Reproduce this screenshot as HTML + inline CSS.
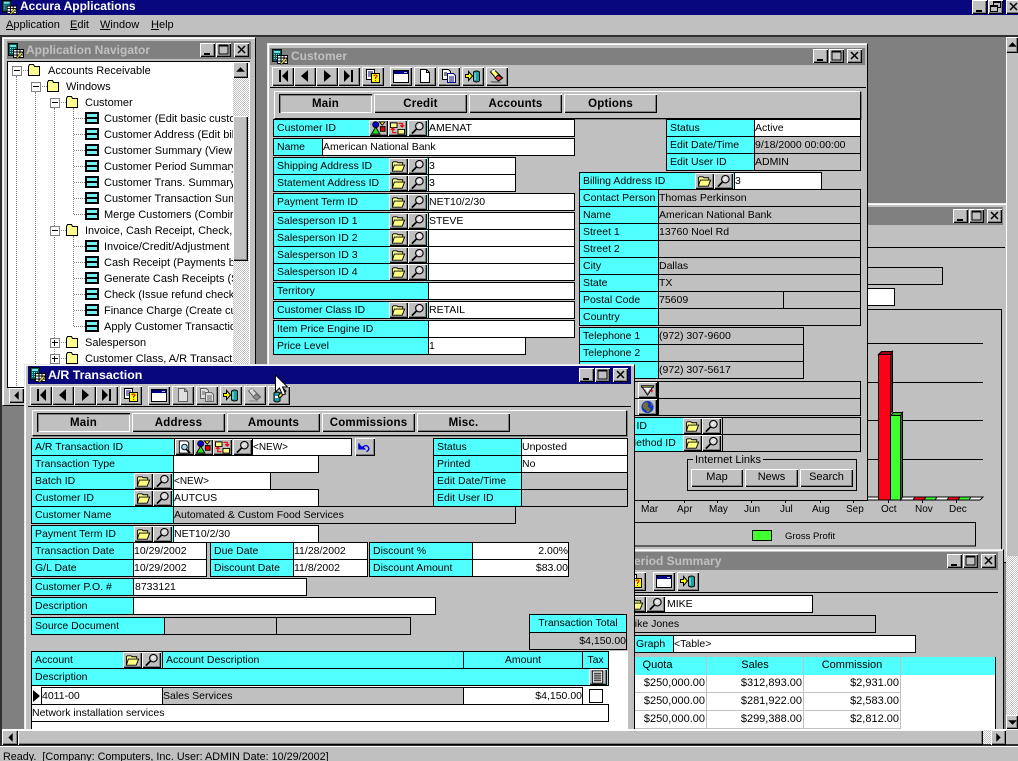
<!DOCTYPE html>
<html><head><meta charset="utf-8"><title>Accura Applications</title>
<style>
html,body{margin:0;padding:0}
#p{position:relative;width:1018px;height:761px;overflow:hidden;background:#808080;font:11px/15px "Liberation Sans",sans-serif;color:#000}
#p div,#p svg{position:absolute}
#p div{box-sizing:border-box;white-space:nowrap}
.l,.w,.g{border:1px solid #000;height:18px;line-height:17px;overflow:hidden;font-size:10.5px}
.l{background:#50ffff;padding-left:3px}
.w{background:#fff;padding-left:0}
.g{background:#c0c0c0;padding-left:0}
.r{text-align:right;padding-right:0}
.c{text-align:center;padding-left:0}
.win{background:#c0c0c0;border:1px solid;border-color:#e8e8e8 #000 #000 #e8e8e8;box-shadow:inset 1px 1px #fff}
.b{background:#c0c0c0;box-shadow:inset 1px 1px #fff,inset -1px -1px #000,inset -2px -2px #808080;width:19px;height:16px}
.b svg{left:2px;top:1px;width:15px;height:14px}
.t{background:#c0c0c0;box-shadow:inset 1px 1px #fff,inset -1px -1px #000,inset -2px -2px #808080;width:22px;height:19px}
.t svg{left:3px;top:1px;width:16px;height:16px}
.d svg{filter:grayscale(1) contrast(.4) brightness(1.25)}
.wb{background:#c0c0c0;box-shadow:inset 1px 1px #fff,inset -1px -1px #000,inset -2px -2px #808080;width:15px;height:14px}
.wb svg{left:0;top:0;width:15px;height:14px}
.ti{font-weight:bold;font-size:12px;line-height:16px}
.tab{background:#c0c0c0;font-weight:bold;font-size:11.5px;text-align:center;line-height:20px;height:19px;width:93px;box-shadow:inset 1px 1px #fff,inset -1px -1px #000,inset -2px -2px #808080;letter-spacing:.2px}
.tab.on{box-shadow:inset 1px 1px #000,inset 2px 2px #808080,inset -1px -1px #fff}
.fr{border:1px solid;border-color:#fff #000 #000 #fff;box-shadow:1px 1px #808080}
.x{line-height:17px}
.dv{border-left:1px dotted #808080;width:1px}
.dh{border-top:1px dotted #808080;height:1px}
.e{width:10px;height:10px;border:1px solid #808080;background:#fff}
.e i{position:absolute;left:1px;top:3px;width:6px;height:1px;background:#000}
.e u{position:absolute;left:3px;top:1px;width:1px;height:6px;background:#000}
.dz{background:repeating-conic-gradient(#c0c0c0 0 25%,#fff 0 50%) 0 0/2px 2px}
.pb{background:#c0c0c0;box-shadow:inset 1px 1px #fff,inset -1px -1px #000,inset -2px -2px #808080;text-align:center;line-height:16px;height:18px;font-size:11px}
.k{background:#000;height:1px}
.gh{background:#50ffff;text-align:center;line-height:17px}
.gc{background:#fff;text-align:right;border-right:1px solid #c0c0c0;border-bottom:1px solid #c0c0c0;height:18px;line-height:17px;padding-right:1px}
.m{font-size:10px;top:502px}
</style></head><body>
<svg width="0" height="0" style="position:absolute;left:-99px">
<symbol id="first" viewBox="0 0 16 16"><path d="M4 2h2v12H4zM13 2v12L7 8z"/></symbol>
<symbol id="prev" viewBox="0 0 16 16"><path d="M11 2v12L4 8z"/></symbol>
<symbol id="next" viewBox="0 0 16 16"><path d="M5 2v12l7-6z"/></symbol>
<symbol id="last" viewBox="0 0 16 16"><path d="M3 2v12l6-6zM10 2h2v12h-2z"/></symbol>
<symbol id="help" viewBox="0 0 16 16"><path d="M1.500 1.500h8v10h-8z" fill="#fff" stroke="#000"/><path d="M3 4h5M3 6h3M3 8h3" stroke="#000080"/><path d="M6.500 5.500h8v9h-8z" fill="#ff0" stroke="#000"/><path d="M9 8q0-1 1.500-1t1.500 1-1.500 1.500V11M10.500 12v1" fill="none" stroke="#d00"/></symbol>
<symbol id="win" viewBox="0 0 16 16"><path d="M0.500 2.500h15v12h-15z" fill="#fff" stroke="#000"/><path d="M1 3h14v3H1z" fill="#000080"/><path d="M11 4h3v1h-3z" fill="#c0c0c0"/><path d="M1 14h14v1H1z"/></symbol>
<symbol id="new" viewBox="0 0 16 16"><path d="M3.500 1.500h6l3 3v10h-9z" fill="#fff" stroke="#000"/><path d="M9.500 1.500v3h3" fill="none" stroke="#000"/></symbol>
<symbol id="copy" viewBox="0 0 16 16"><path d="M1.500 1.500h6l2 2v8h-8z" fill="#fff" stroke="#000"/><path d="M6.500 5.500h6l2 2v7h-8z" fill="#fff" stroke="#000080"/><path d="M8 9h5M8 11h5M8 13h5" stroke="#000080"/><path d="M3 5h3M3 7h3" stroke="#000"/></symbol>
<symbol id="save" viewBox="0 0 16 16"><path d="M0.500 6.500h3v-3l4 4.500-4 4.500v-3h-3z" fill="#ff0" stroke="#000"/><path d="M8.500 4q3-2 6 0v9q-3 2-6 0z" fill="#20a0a0" stroke="#000"/><path d="M10 5v7" stroke="#90ffff"/></symbol>
<symbol id="erase" viewBox="0 0 16 16"><path d="M1 13h9l3 2H3z" fill="#808080"/><path d="M5 1.500L1.500 4l8 9 4-3z" fill="#ffff60" stroke="#000"/><path d="M4 3l-1 1M8 7l-2 2" stroke="#fff"/><path d="M9 7l-3 3 3.500 3 4-3z" fill="#e84040" stroke="#000"/><path d="M2.500 3l3-1.500 1 1-3.500 2z" fill="#fff"/></symbol>
<symbol id="folder" viewBox="0 0 16 14"><path d="M1.500 12.500v-9l1-1h4l1 1h5v2" fill="#ffff90" stroke="#000"/><path d="M1.500 12.500l2-6.500h11l-2.500 6.500z" fill="#ffff80" stroke="#000"/></symbol>
<symbol id="mag" viewBox="0 0 16 14"><circle cx="10" cy="5" r="4" fill="#d8d8d8" stroke="#000" stroke-width="1.200"/><path d="M7 8l-5 5" stroke="#000" stroke-width="1.800"/><path d="M8 6l3-3" stroke="#fff"/></symbol>
<symbol id="org" viewBox="0 0 16 14"><circle cx="5" cy="3.500" r="3.200" fill="#0000e0" stroke="#000"/><path d="M9 0.500h6L12 4z" fill="#ff0" stroke="#000"/><path d="M10 5.500h5v5h-5z" fill="#e00" stroke="#000"/><path d="M5 6l4.500 7.500h-9z" fill="#20e020" stroke="#000"/></symbol>
<symbol id="exch" viewBox="0 0 16 14"><path d="M0.500 1.500h7v5h-7z" fill="#ffff80" stroke="#000"/><path d="M8.500 8.500h7v5h-7z" fill="#ffff80" stroke="#000"/><path d="M9 2h4v3M11 4l2 2 2-2" fill="none" stroke="#e00" stroke-width="1.300"/><path d="M7 12H3V8M1 9l2-2 2 2" fill="none" stroke="#e00" stroke-width="1.300"/></symbol>
<symbol id="dm" viewBox="0 0 16 14"><path d="M2.500 0.500h8l2 2v11h-10z" fill="#fff" stroke="#000"/><circle cx="8" cy="7" r="3" fill="#a0e0ff" stroke="#000"/><path d="M10 9.500l4 4" stroke="#000" stroke-width="1.800"/></symbol>
<symbol id="undo" viewBox="0 0 16 14"><path d="M2 3v6h6L6 7q4-3 6 0t-2 5" fill="none" stroke="#0000d0" stroke-width="1.400"/><path d="M2 3v6h5z" fill="#0000d0"/></symbol>
<symbol id="gem" viewBox="0 0 16 14"><path d="M1.500 2.500h13l-6.500 10z" fill="#fff" stroke="#000"/><path d="M1.500 2.500h13v1.500h-13z" fill="#ffff60" stroke="#000"/><path d="M5 6l3 5 3-5" fill="none" stroke="#808080"/><path d="M11 8h3M12.500 6.500v3" stroke="#e00"/></symbol>
<symbol id="globe" viewBox="0 0 16 14"><circle cx="8" cy="7" r="6.500" fill="#1030d0"/><path d="M3 4l4-3 2 3-1 3 3 1 0 3-3 2-2-3-3-2zM11 2l3 3-2 1z" fill="#707030"/></symbol>
<symbol id="list" viewBox="0 0 16 14"><path d="M2.500 0.500h11v13h-11z" fill="#fff" stroke="#000"/><path d="M4 3h8M4 5h8M4 7h8M4 9h8M4 11h8" stroke="#000"/></symbol>
<symbol id="tf" viewBox="0 0 14 12"><path d="M0 0h14v12H0z"/><path d="M2 2h10v3H2zM2 7h10v3H2z" fill="#70f0f0"/><path d="M0 5.500h14" stroke="#000"/></symbol>
<symbol id="tfo" viewBox="0 0 12 12"><path d="M0.500 2.500l1-2h4l1 2h5v9h-11z" fill="#ffff90" stroke="#000"/></symbol>
<symbol id="app" viewBox="0 0 16 16"><path d="M0.500 0.500h9v12h-9z" fill="#006060" stroke="#000"/><path d="M2 2h6v2H2zM2 5h1v1H2zM4 5h1v1H4zM6 5h1v1H6zM2 7h1v1H2zM4 7h1v1H4zM6 7h1v1H6zM2 9h1v1H2zM4 9h1v1H4zM6 9h1v1H6z" fill="#70e0e0"/><path d="M5.500 6.500h10v8h-10z" fill="#fff" stroke="#000"/><path d="M6 9h9M6 12h9M9 7v7M12 7v7" stroke="#000"/><path d="M8 15l5-6 2 1-5 5z" fill="#e0d040" stroke="#000" stroke-width=".5"/></symbol>
<symbol id="mn" viewBox="0 0 15 14"><path d="M4 10h6v2H4z"/></symbol>
<symbol id="mx" viewBox="0 0 15 14"><path d="M3 2h9v9H3z" fill="none" stroke="#000"/><path d="M3 2h9v1.500H3z"/></symbol>
<symbol id="cl" viewBox="0 0 15 14"><path d="M4 3l7 7M11 3l-7 7" stroke="#000" stroke-width="1.500"/></symbol>
<symbol id="rs" viewBox="0 0 15 14"><path d="M5.500 1.500h7v6h-7z" fill="none" stroke="#000"/><path d="M5 1h8v2H5z"/><path d="M2.500 5.500h7v6h-7z" fill="#c0c0c0" stroke="#000"/><path d="M2 5h8v2H2z"/></symbol>
<symbol id="au" viewBox="0 0 10 10"><path d="M5 3l-4 4h8z"/></symbol>
<symbol id="ad" viewBox="0 0 10 10"><path d="M5 7L1 3h8z"/></symbol>
<symbol id="al" viewBox="0 0 10 10"><path d="M3 5l4-4v8z"/></symbol>
<symbol id="ar" viewBox="0 0 10 10"><path d="M7 5L3 1v8z"/></symbol>
</svg>
<div id="p">

<!-- app title / menu -->
<div style="left:0;top:0;width:1018px;height:15px;background:#08087c"></div>
<svg style="left:2px;top:0;width:15px;height:15px"><use href="#app"/></svg>
<div class="ti" style="left:20px;top:-2px;color:#fff;font-size:12px">Accura Applications</div>
<div class="wb" style="left:972px;top:0"><svg><use href="#mn"/></svg></div>
<div class="wb" style="left:988px;top:0"><svg><use href="#rs"/></svg></div>
<div class="wb" style="left:1006px;top:0"><svg><use href="#cl"/></svg></div>
<div style="left:0;top:15px;width:1018px;height:20px;background:#c0c0c0"></div>
<div style="left:0;top:35px;width:1018px;height:2px;background:#303030"></div>
<div style="left:6px;top:18px"><u>A</u>pplication</div>
<div style="left:70px;top:18px"><u>E</u>dit</div>
<div style="left:100px;top:18px"><u>W</u>indow</div>
<div style="left:151px;top:18px"><u>H</u>elp</div>

<!-- back chart window -->
<div class="win" style="left:600px;top:203px;width:406px;height:360px;border-right:none"></div>
<div style="left:700px;top:207px;width:303px;height:18px;background:#808080"></div>
<div class="wb" style="left:953px;top:209px"><svg><use href="#mn"/></svg></div>
<div class="wb" style="left:969px;top:209px"><svg><use href="#mx"/></svg></div>
<div class="wb" style="left:987px;top:209px"><svg><use href="#cl"/></svg></div>
<div class="k" style="left:700px;top:247px;width:305px"></div>
<div class="g" style="left:700px;top:267px;width:243px"></div>
<div class="w" style="left:700px;top:288px;width:195px"></div>
<svg style="left:0;top:0" width="1018" height="761">
<path d="M600 309.500h401.500V550" fill="none" stroke="#000"/>
<path d="M700 343.500h283M700 382.500h283M700 420.500h283M700 459.500h283" stroke="#000"/>
<path d="M860 500l3-3h120l-3 3z" fill="#fff" stroke="#000"/>
<path d="M878.500 500V354.500h12V500z" fill="#ff0018" stroke="#000"/>
<path d="M878.500 354.500l3-3h11l-2 3zM890.500 354.500l2-3V412h-2z" fill="#a00010" stroke="#000"/>
<path d="M890.500 500V415.500h10V500z" fill="#40ff30" stroke="#000"/>
<path d="M890.500 415.500l3-3h9l-2 3z" fill="#30c020" stroke="#000"/>
<path d="M900.500 415.500l2-3V497l-2 3z" fill="#1f7a1a" stroke="#000"/>
<path d="M913 500l2-3h11l-2 3z" fill="#ff0018" stroke="#000"/><path d="M924 500l2-3h11l-2 3z" fill="#40ff30" stroke="#000"/>
<path d="M947 500l2-3h11l-2 3z" fill="#ff0018" stroke="#000"/><path d="M958 500l2-3h11l-2 3z" fill="#40ff30" stroke="#000"/>
<path d="M648.500 500v3M684.500 500v3M717.500 500v3M751.500 500v3M785.500 500v3M820.500 500v3M853.500 500v3M888.500 500v3M922.500 500v3M956.500 500v3" stroke="#000"/>
<path d="M630 522.500h345.500v23.500H630" fill="none" stroke="#000"/>
<rect x="752.500" y="530.500" width="19" height="10" fill="#40ff30" stroke="#000"/>
</svg>
<div class="m" style="left:641px">Mar</div>
<div class="m" style="left:677px">Apr</div>
<div class="m" style="left:709px">May</div>
<div class="m" style="left:744px">Jun</div>
<div class="m" style="left:780px">Jul</div>
<div class="m" style="left:812px">Aug</div>
<div class="m" style="left:846px">Sep</div>
<div class="m" style="left:881px">Oct</div>
<div class="m" style="left:915px">Nov</div>
<div class="m" style="left:949px">Dec</div>
<div style="left:785px;top:529px;font-size:9.500px">Gross Profit</div>

<!-- period summary window -->
<div class="win" style="left:560px;top:549px;width:444px;height:190px"></div>
<div style="left:600px;top:552px;width:398px;height:18px;background:#808080"></div>
<div class="ti" style="left:626px;top:553px;color:#c0c0c0">Period Summary</div>
<div class="wb" style="left:947px;top:554px"><svg><use href="#mn"/></svg></div>
<div class="wb" style="left:963px;top:554px"><svg><use href="#mx"/></svg></div>
<div class="wb" style="left:981px;top:554px"><svg><use href="#cl"/></svg></div>
<div class="t" style="left:624px;top:572px"><svg><use href="#help"/></svg></div>
<div class="t" style="left:653px;top:572px"><svg><use href="#win"/></svg></div>
<div class="t" style="left:677px;top:572px"><svg><use href="#save"/></svg></div>
<div class="k" style="left:600px;top:592px;width:398px"></div>
<div class="w" style="left:600px;top:595px;width:213px;padding-left:66px">MIKE</div>
<div class="b" style="left:627px;top:596px"><svg><use href="#folder"/></svg></div>
<div class="b" style="left:646px;top:596px"><svg><use href="#mag"/></svg></div>
<div class="g" style="left:600px;top:615px;width:276px;padding-left:25px">Mike Jones</div>
<div class="l" style="left:600px;top:635px;width:74px;padding-left:35px">Graph</div>
<div class="w" style="left:673px;top:635px;width:243px">&lt;Table&gt;</div>
<div style="left:600px;top:657px;width:396px;height:80px;background:#fff;border-right:1px solid #000;border-top:1px solid #000"></div>
<div class="gh" style="left:600px;top:657px;width:395px;height:18px"></div>
<div class="gh" style="left:609px;top:657px;width:98px;height:17px;border-right:1px solid #c0c0c0">Quota</div>
<div class="gh" style="left:707px;top:657px;width:97px;height:17px;border-right:1px solid #c0c0c0">Sales</div>
<div class="gh" style="left:804px;top:657px;width:97px;height:17px;border-right:1px solid #c0c0c0">Commission</div>
<div class="gc" style="left:609px;top:675px;width:98px">$250,000.00</div>
<div class="gc" style="left:707px;top:675px;width:97px">$312,893.00</div>
<div class="gc" style="left:804px;top:675px;width:97px">$2,931.00</div>
<div class="gc" style="left:609px;top:693px;width:98px">$250,000.00</div>
<div class="gc" style="left:707px;top:693px;width:97px">$281,922.00</div>
<div class="gc" style="left:804px;top:693px;width:97px">$2,583.00</div>
<div class="gc" style="left:609px;top:711px;width:98px">$250,000.00</div>
<div class="gc" style="left:707px;top:711px;width:97px">$299,388.00</div>
<div class="gc" style="left:804px;top:711px;width:97px">$2,812.00</div>

<!-- application navigator -->
<div class="win" style="left:2px;top:37px;width:254px;height:369px"></div>
<div style="left:7px;top:41px;width:244px;height:18px;background:#808080"></div>
<svg style="left:8px;top:43px;width:16px;height:16px"><use href="#app"/></svg>
<div class="ti" style="left:26px;top:42px;color:#c0c0c0">Application Navigator</div>
<div class="wb" style="left:200px;top:43px"><svg><use href="#mn"/></svg></div>
<div class="wb" style="left:216px;top:43px"><svg><use href="#mx"/></svg></div>
<div class="wb" style="left:234px;top:43px"><svg><use href="#cl"/></svg></div>
<div style="left:7px;top:61px;width:243px;height:327px;background:#fff;border-left:1px solid #000;border-top:1px solid #000"></div>
<div style="left:0;top:0;width:1018px;height:761px;clip-path:inset(62px 785px 374px 8px)">
<div class="dv" style="left:16px;top:76px;height:320px"></div>
<div class="dv" style="left:35px;top:92px;height:300px"></div>
<div class="dv" style="left:54px;top:108px;height:260px"></div>
<div class="dv" style="left:73px;top:108px;height:106px"></div>
<div class="dv" style="left:73px;top:236px;height:90px"></div>
<div class="dh" style="left:21px;top:70px;width:7px"></div>
<div class="dh" style="left:40px;top:86px;width:7px"></div>
<div class="dh" style="left:59px;top:102px;width:7px"></div>
<div class="dh" style="left:59px;top:230px;width:7px"></div>
<div class="dh" style="left:59px;top:342px;width:7px"></div>
<div class="dh" style="left:59px;top:358px;width:7px"></div>
<div class="dh" style="left:74px;top:118px;width:11px"></div>
<div class="dh" style="left:74px;top:134px;width:11px"></div>
<div class="dh" style="left:74px;top:150px;width:11px"></div>
<div class="dh" style="left:74px;top:166px;width:11px"></div>
<div class="dh" style="left:74px;top:182px;width:11px"></div>
<div class="dh" style="left:74px;top:198px;width:11px"></div>
<div class="dh" style="left:74px;top:214px;width:11px"></div>
<div class="dh" style="left:74px;top:246px;width:11px"></div>
<div class="dh" style="left:74px;top:262px;width:11px"></div>
<div class="dh" style="left:74px;top:278px;width:11px"></div>
<div class="dh" style="left:74px;top:294px;width:11px"></div>
<div class="dh" style="left:74px;top:310px;width:11px"></div>
<div class="dh" style="left:74px;top:326px;width:11px"></div>
<div class="e" style="left:12px;top:66px"><i></i></div>
<div class="e" style="left:31px;top:82px"><i></i></div>
<div class="e" style="left:50px;top:98px"><i></i></div>
<div class="e" style="left:50px;top:226px"><i></i></div>
<div class="e" style="left:50px;top:338px"><i></i><u></u></div>
<div class="e" style="left:50px;top:354px"><i></i><u></u></div>
<svg style="left:28px;top:64px;width:12px;height:12px"><use href="#tfo"/></svg>
<svg style="left:47px;top:80px;width:12px;height:12px"><use href="#tfo"/></svg>
<svg style="left:66px;top:96px;width:12px;height:12px"><use href="#tfo"/></svg>
<svg style="left:66px;top:224px;width:12px;height:12px"><use href="#tfo"/></svg>
<svg style="left:66px;top:336px;width:12px;height:12px"><use href="#tfo"/></svg>
<svg style="left:66px;top:352px;width:12px;height:12px"><use href="#tfo"/></svg>
<svg style="left:85px;top:112px;width:14px;height:12px"><use href="#tf"/></svg>
<svg style="left:85px;top:128px;width:14px;height:12px"><use href="#tf"/></svg>
<svg style="left:85px;top:144px;width:14px;height:12px"><use href="#tf"/></svg>
<svg style="left:85px;top:160px;width:14px;height:12px"><use href="#tf"/></svg>
<svg style="left:85px;top:176px;width:14px;height:12px"><use href="#tf"/></svg>
<svg style="left:85px;top:192px;width:14px;height:12px"><use href="#tf"/></svg>
<svg style="left:85px;top:208px;width:14px;height:12px"><use href="#tf"/></svg>
<svg style="left:85px;top:240px;width:14px;height:12px"><use href="#tf"/></svg>
<svg style="left:85px;top:256px;width:14px;height:12px"><use href="#tf"/></svg>
<svg style="left:85px;top:272px;width:14px;height:12px"><use href="#tf"/></svg>
<svg style="left:85px;top:288px;width:14px;height:12px"><use href="#tf"/></svg>
<svg style="left:85px;top:304px;width:14px;height:12px"><use href="#tf"/></svg>
<svg style="left:85px;top:320px;width:14px;height:12px"><use href="#tf"/></svg>
<div class="x" style="left:48px;top:63px">Accounts Receivable</div>
<div class="x" style="left:66px;top:79px">Windows</div>
<div class="x" style="left:85px;top:95px">Customer</div>
<div class="x" style="left:104px;top:111px">Customer (Edit basic customer</div>
<div class="x" style="left:104px;top:127px">Customer Address (Edit billing</div>
<div class="x" style="left:104px;top:143px">Customer Summary (View summary</div>
<div class="x" style="left:104px;top:159px">Customer Period Summary (View</div>
<div class="x" style="left:104px;top:175px">Customer Trans. Summary (View</div>
<div class="x" style="left:104px;top:191px">Customer Transaction Summary</div>
<div class="x" style="left:104px;top:207px">Merge Customers (Combine</div>
<div class="x" style="left:85px;top:223px">Invoice, Cash Receipt, Check, Finance</div>
<div class="x" style="left:104px;top:239px">Invoice/Credit/Adjustment (Edit</div>
<div class="x" style="left:104px;top:255px">Cash Receipt (Payments by</div>
<div class="x" style="left:104px;top:271px">Generate Cash Receipts (Select</div>
<div class="x" style="left:104px;top:287px">Check (Issue refund check</div>
<div class="x" style="left:104px;top:303px">Finance Charge (Create customer</div>
<div class="x" style="left:104px;top:319px">Apply Customer Transaction</div>
<div class="x" style="left:85px;top:335px">Salesperson</div>
<div class="x" style="left:85px;top:351px">Customer Class, A/R Transaction</div>
</div>
<div class="dz" style="left:233px;top:78px;width:16px;height:310px"></div>
<div class="t" style="left:233px;top:62px;width:15px;height:16px"><svg style="left:2px;top:2px;width:11px;height:11px"><use href="#au"/></svg></div>
<div class="t" style="left:233px;top:116px;width:15px;height:145px"></div>
<div style="left:7px;top:387px;width:243px;height:1px;background:#000"></div>
<div class="t" style="left:9px;top:388px;width:15px;height:15px"><svg style="left:2px;top:2px;width:11px;height:11px"><use href="#al"/></svg></div>

<!-- customer window -->
<div class="win" style="left:267px;top:43px;width:601px;height:458px"></div>
<div style="left:270px;top:48px;width:595px;height:17px;background:#808080"></div>
<svg style="left:272px;top:49px;width:16px;height:16px"><use href="#app"/></svg>
<div class="ti" style="left:291px;top:48px;color:#c0c0c0">Customer</div>
<div class="wb" style="left:813px;top:49px"><svg><use href="#mn"/></svg></div>
<div class="wb" style="left:829px;top:49px"><svg><use href="#mx"/></svg></div>
<div class="wb" style="left:847px;top:49px"><svg><use href="#cl"/></svg></div>
<div class="t" style="left:272px;top:67px"><svg><use href="#first"/></svg></div>
<div class="t" style="left:294px;top:67px"><svg><use href="#prev"/></svg></div>
<div class="t" style="left:316px;top:67px"><svg><use href="#next"/></svg></div>
<div class="t" style="left:338px;top:67px"><svg><use href="#last"/></svg></div>
<div class="t" style="left:362px;top:67px"><svg><use href="#help"/></svg></div>
<div class="t" style="left:390px;top:67px"><svg><use href="#win"/></svg></div>
<div class="t" style="left:414px;top:67px"><svg><use href="#new"/></svg></div>
<div class="t" style="left:438px;top:67px"><svg><use href="#copy"/></svg></div>
<div class="t" style="left:462px;top:67px"><svg><use href="#save"/></svg></div>
<div class="t" style="left:486px;top:67px"><svg><use href="#erase"/></svg></div>
<div class="k" style="left:270px;top:87px;width:596px"></div>
<div class="fr" style="left:274px;top:91px;width:587px;height:28px"></div>
<div class="tab on" style="left:279px;top:94px">Main</div>
<div class="tab" style="left:374px;top:94px">Credit</div>
<div class="tab" style="left:469px;top:94px">Accounts</div>
<div class="tab" style="left:564px;top:94px">Options</div>

<div class="l" style="left:273px;top:119px;width:156px">Customer ID</div>
<div class="w" style="left:428px;top:119px;width:147px">AMENAT</div>
<div class="b" style="left:369px;top:120px"><svg><use href="#org"/></svg></div>
<div class="b" style="left:388px;top:120px"><svg><use href="#exch"/></svg></div>
<div class="b" style="left:408px;top:120px"><svg><use href="#mag"/></svg></div>
<div class="l" style="left:273px;top:138px;width:50px">Name</div>
<div class="w" style="left:322px;top:138px;width:253px">American National Bank</div>
<div class="l" style="left:273px;top:157px;width:156px">Shipping Address ID</div>
<div class="w" style="left:428px;top:157px;width:88px">3</div>
<div class="b" style="left:389px;top:158px"><svg><use href="#folder"/></svg></div>
<div class="b" style="left:408px;top:158px"><svg><use href="#mag"/></svg></div>
<div class="l" style="left:273px;top:174px;width:156px">Statement Address ID</div>
<div class="w" style="left:428px;top:174px;width:88px">3</div>
<div class="b" style="left:389px;top:175px"><svg><use href="#folder"/></svg></div>
<div class="b" style="left:408px;top:175px"><svg><use href="#mag"/></svg></div>
<div class="l" style="left:273px;top:193px;width:156px">Payment Term ID</div>
<div class="w" style="left:428px;top:193px;width:147px">NET10/2/30</div>
<div class="b" style="left:389px;top:194px"><svg><use href="#folder"/></svg></div>
<div class="b" style="left:408px;top:194px"><svg><use href="#mag"/></svg></div>
<div class="l" style="left:273px;top:212px;width:156px">Salesperson ID 1</div>
<div class="w" style="left:428px;top:212px;width:147px">STEVE</div>
<div class="b" style="left:389px;top:213px"><svg><use href="#folder"/></svg></div>
<div class="b" style="left:408px;top:213px"><svg><use href="#mag"/></svg></div>
<div class="l" style="left:273px;top:229px;width:156px">Salesperson ID 2</div>
<div class="w" style="left:428px;top:229px;width:147px"></div>
<div class="b" style="left:389px;top:230px"><svg><use href="#folder"/></svg></div>
<div class="b" style="left:408px;top:230px"><svg><use href="#mag"/></svg></div>
<div class="l" style="left:273px;top:246px;width:156px">Salesperson ID 3</div>
<div class="w" style="left:428px;top:246px;width:147px"></div>
<div class="b" style="left:389px;top:247px"><svg><use href="#folder"/></svg></div>
<div class="b" style="left:408px;top:247px"><svg><use href="#mag"/></svg></div>
<div class="l" style="left:273px;top:263px;width:156px">Salesperson ID 4</div>
<div class="w" style="left:428px;top:263px;width:147px"></div>
<div class="b" style="left:389px;top:264px"><svg><use href="#folder"/></svg></div>
<div class="b" style="left:408px;top:264px"><svg><use href="#mag"/></svg></div>
<div class="l" style="left:273px;top:282px;width:156px">Territory</div>
<div class="w" style="left:428px;top:282px;width:147px"></div>
<div class="l" style="left:273px;top:301px;width:156px">Customer Class ID</div>
<div class="w" style="left:428px;top:301px;width:147px">RETAIL</div>
<div class="b" style="left:389px;top:302px"><svg><use href="#folder"/></svg></div>
<div class="b" style="left:408px;top:302px"><svg><use href="#mag"/></svg></div>
<div class="l" style="left:273px;top:320px;width:156px">Item Price Engine ID</div>
<div class="w" style="left:428px;top:320px;width:147px"></div>
<div class="l" style="left:273px;top:337px;width:156px">Price Level</div>
<div class="w" style="left:428px;top:337px;width:98px">1</div>

<div class="l" style="left:666px;top:119px;width:89px">Status</div>
<div class="w" style="left:754px;top:119px;width:107px">Active</div>
<div class="l" style="left:666px;top:136px;width:89px">Edit Date/Time</div>
<div class="g" style="left:754px;top:136px;width:107px">9/18/2000 00:00:00</div>
<div class="l" style="left:666px;top:153px;width:89px">Edit User ID</div>
<div class="g" style="left:754px;top:153px;width:107px">ADMIN</div>

<div class="l" style="left:579px;top:172px;width:156px">Billing Address ID</div>
<div class="w" style="left:734px;top:172px;width:88px">3</div>
<div class="b" style="left:695px;top:173px"><svg><use href="#folder"/></svg></div>
<div class="b" style="left:714px;top:173px"><svg><use href="#mag"/></svg></div>
<div class="l" style="left:579px;top:189px;width:80px">Contact Person</div>
<div class="g" style="left:658px;top:189px;width:203px">Thomas Perkinson</div>
<div class="l" style="left:579px;top:206px;width:80px">Name</div>
<div class="g" style="left:658px;top:206px;width:203px">American National Bank</div>
<div class="l" style="left:579px;top:223px;width:80px">Street 1</div>
<div class="g" style="left:658px;top:223px;width:203px">13760 Noel Rd</div>
<div class="l" style="left:579px;top:240px;width:80px">Street 2</div>
<div class="g" style="left:658px;top:240px;width:203px"></div>
<div class="l" style="left:579px;top:257px;width:80px">City</div>
<div class="g" style="left:658px;top:257px;width:203px">Dallas</div>
<div class="l" style="left:579px;top:274px;width:80px">State</div>
<div class="g" style="left:658px;top:274px;width:203px">TX</div>
<div class="l" style="left:579px;top:291px;width:80px">Postal Code</div>
<div class="g" style="left:658px;top:291px;width:126px">75609</div>
<div class="g" style="left:783px;top:291px;width:78px"></div>
<div class="l" style="left:579px;top:308px;width:80px">Country</div>
<div class="g" style="left:658px;top:308px;width:203px"></div>
<div class="l" style="left:579px;top:327px;width:80px">Telephone 1</div>
<div class="g" style="left:658px;top:327px;width:146px">(972) 307-9600</div>
<div class="l" style="left:579px;top:344px;width:80px">Telephone 2</div>
<div class="g" style="left:658px;top:344px;width:146px"></div>
<div class="l" style="left:579px;top:361px;width:80px">Fax</div>
<div class="g" style="left:658px;top:361px;width:146px">(972) 307-5617</div>
<div class="g" style="left:600px;top:381px;width:261px"></div>
<div class="g" style="left:600px;top:398px;width:261px"></div>
<div class="b" style="left:638px;top:382px"><svg><use href="#gem"/></svg></div>
<div class="b" style="left:638px;top:399px"><svg><use href="#globe"/></svg></div>
<div style="left:657px;top:381px;width:2px;height:34px;background:#000"></div>
<div class="l r" style="left:579px;top:417px;width:105px;padding-right:36px">Carrier ID</div>
<div class="g" style="left:683px;top:417px;width:178px"></div>
<div class="b" style="left:683px;top:418px"><svg><use href="#folder"/></svg></div>
<div class="b" style="left:702px;top:418px"><svg><use href="#mag"/></svg></div>
<div class="l r" style="left:579px;top:434px;width:105px;padding-right:10px">Payment Method ID</div>
<div class="g" style="left:683px;top:434px;width:178px"></div>
<div class="b" style="left:683px;top:435px"><svg><use href="#folder"/></svg></div>
<div class="b" style="left:702px;top:435px"><svg><use href="#mag"/></svg></div>
<div style="left:722px;top:417px;width:1px;height:34px;background:#000"></div>
<div style="left:687px;top:459px;width:170px;height:32px;border:1px solid #000"></div>
<div style="left:693px;top:453px;padding:0 2px;background:#c0c0c0;font-size:11px">Internet Links</div>
<div class="pb" style="left:691px;top:469px;width:52px">Map</div>
<div class="pb" style="left:745px;top:469px;width:53px">News</div>
<div class="pb" style="left:800px;top:469px;width:53px">Search</div>

<!-- A/R transaction window -->
<div class="win" style="left:24px;top:364px;width:611px;height:375px"></div>
<div style="left:28px;top:366px;width:603px;height:18px;background:#08087c"></div>
<svg style="left:30px;top:367px;width:16px;height:16px"><use href="#app"/></svg>
<div class="ti" style="left:48px;top:367px;color:#fff;font-size:12.400px">A/R Transaction</div>
<div class="wb" style="left:579px;top:368px"><svg><use href="#mn"/></svg></div>
<div class="wb" style="left:595px;top:368px"><svg><use href="#mx"/></svg></div>
<div class="wb" style="left:613px;top:368px"><svg><use href="#cl"/></svg></div>
<div class="t" style="left:30px;top:386px"><svg><use href="#first"/></svg></div>
<div class="t" style="left:52px;top:386px"><svg><use href="#prev"/></svg></div>
<div class="t" style="left:74px;top:386px"><svg><use href="#next"/></svg></div>
<div class="t" style="left:96px;top:386px"><svg><use href="#last"/></svg></div>
<div class="t" style="left:120px;top:386px"><svg><use href="#help"/></svg></div>
<div class="t" style="left:148px;top:386px"><svg><use href="#win"/></svg></div>
<div class="t d" style="left:172px;top:386px"><svg><use href="#new"/></svg></div>
<div class="t d" style="left:196px;top:386px"><svg><use href="#copy"/></svg></div>
<div class="t" style="left:220px;top:386px"><svg><use href="#save"/></svg></div>
<div class="t d" style="left:244px;top:386px"><svg><use href="#erase"/></svg></div>
<div class="t" style="left:268px;top:386px"><svg viewBox="0 0 16 16"><path d="M3 6q3-2 6 0v8q-3 2-6 0z" fill="#20a0a0" stroke="#000"/><path d="M7 9l6-7 2 2-6 7z" fill="#ffe040" stroke="#000"/><path d="M4 9h3v2H4z" fill="#fff"/></svg></div>
<div class="k" style="left:28px;top:406px;width:603px"></div>
<div class="fr" style="left:32px;top:410px;width:595px;height:26px"></div>
<div class="tab on" style="left:37px;top:413px">Main</div>
<div class="tab" style="left:132px;top:413px">Address</div>
<div class="tab" style="left:227px;top:413px">Amounts</div>
<div class="tab" style="left:322px;top:413px">Commissions</div>
<div class="tab" style="left:417px;top:413px">Misc.</div>

<div class="l" style="left:31px;top:438px;width:144px">A/R Transaction ID</div>
<div class="b" style="left:175px;top:439px"><svg><use href="#dm"/></svg></div>
<div class="b" style="left:194px;top:439px"><svg><use href="#org"/></svg></div>
<div class="b" style="left:213px;top:439px"><svg><use href="#exch"/></svg></div>
<div class="b" style="left:233px;top:439px"><svg><use href="#mag"/></svg></div>
<div style="left:173px;top:438px;width:80px;height:1px;background:#000"></div>
<div style="left:173px;top:455px;width:80px;height:1px;background:#000"></div>
<div class="w" style="left:252px;top:438px;width:100px;font-size:10px">&lt;NEW&gt;</div>
<div class="b" style="left:355px;top:438px;width:20px;height:18px"><svg style="top:2px"><use href="#undo"/></svg></div>
<div class="l" style="left:31px;top:455px;width:143px">Transaction Type</div>
<div class="w" style="left:173px;top:455px;width:146px"></div>
<div class="l" style="left:31px;top:472px;width:143px">Batch ID</div>
<div class="w" style="left:173px;top:472px;width:98px;font-size:10px">&lt;NEW&gt;</div>
<div class="b" style="left:134px;top:473px"><svg><use href="#folder"/></svg></div>
<div class="b" style="left:153px;top:473px"><svg><use href="#mag"/></svg></div>
<div class="l" style="left:31px;top:489px;width:143px">Customer ID</div>
<div class="w" style="left:173px;top:489px;width:146px">AUTCUS</div>
<div class="b" style="left:134px;top:490px"><svg><use href="#folder"/></svg></div>
<div class="b" style="left:153px;top:490px"><svg><use href="#mag"/></svg></div>
<div class="l" style="left:31px;top:506px;width:143px">Customer Name</div>
<div class="g" style="left:173px;top:506px;width:343px">Automated &amp; Custom Food Services</div>
<div class="l" style="left:31px;top:525px;width:143px">Payment Term ID</div>
<div class="w" style="left:173px;top:525px;width:146px">NET10/2/30</div>
<div class="b" style="left:134px;top:526px"><svg><use href="#folder"/></svg></div>
<div class="b" style="left:153px;top:526px"><svg><use href="#mag"/></svg></div>
<div class="l" style="left:31px;top:542px;width:103px">Transaction Date</div>
<div class="w" style="left:133px;top:542px;width:74px">10/29/2002</div>
<div class="l" style="left:210px;top:542px;width:84px">Due Date</div>
<div class="w" style="left:293px;top:542px;width:75px">11/28/2002</div>
<div class="l" style="left:31px;top:559px;width:103px">G/L Date</div>
<div class="w" style="left:133px;top:559px;width:74px">10/29/2002</div>
<div class="l" style="left:210px;top:559px;width:84px">Discount Date</div>
<div class="w" style="left:293px;top:559px;width:75px">11/8/2002</div>
<div class="l" style="left:31px;top:578px;width:103px">Customer P.O. #</div>
<div class="w" style="left:133px;top:578px;width:174px;padding-left:1px">8733121</div>
<div class="l" style="left:31px;top:597px;width:103px">Description</div>
<div class="w" style="left:133px;top:597px;width:303px"></div>
<div class="l" style="left:31px;top:617px;width:134px">Source Document</div>
<div class="g" style="left:164px;top:617px;width:113px"></div>
<div class="g" style="left:276px;top:617px;width:135px"></div>

<div class="l" style="left:433px;top:438px;width:89px">Status</div>
<div class="w" style="left:521px;top:438px;width:107px">Unposted</div>
<div class="l" style="left:433px;top:455px;width:89px">Printed</div>
<div class="w" style="left:521px;top:455px;width:107px">No</div>
<div class="l" style="left:433px;top:472px;width:89px">Edit Date/Time</div>
<div class="g" style="left:521px;top:472px;width:107px"></div>
<div class="l" style="left:433px;top:489px;width:89px">Edit User ID</div>
<div class="g" style="left:521px;top:489px;width:107px"></div>
<div class="l" style="left:369px;top:542px;width:104px">Discount %</div>
<div class="w r" style="left:472px;top:542px;width:97px">2.00%</div>
<div class="l" style="left:369px;top:559px;width:104px">Discount Amount</div>
<div class="w r" style="left:472px;top:559px;width:97px">$83.00</div>
<div class="l c" style="left:529px;top:614px;width:98px;height:19px">Transaction Total</div>
<div class="g r" style="left:529px;top:632px;width:98px">$4,150.00</div>

<div style="left:31px;top:651px;width:597px;height:85px;background:#fff;border-left:1px solid #000"></div>
<div class="l" style="left:31px;top:651px;width:132px">Account</div>
<div class="b" style="left:123px;top:652px"><svg><use href="#folder"/></svg></div>
<div class="b" style="left:142px;top:652px"><svg><use href="#mag"/></svg></div>
<div class="l" style="left:162px;top:651px;width:302px">Account Description</div>
<div class="l c" style="left:463px;top:651px;width:120px">Amount</div>
<div class="l c" style="left:582px;top:651px;width:27px">Tax</div>
<div class="l" style="left:31px;top:668px;width:578px">Description</div>
<div class="b" style="left:589px;top:669px;width:18px"><svg style="left:1px"><use href="#list"/></svg></div>
<svg style="left:33px;top:689px;width:8px;height:14px"><path d="M0 1l7 6-7 6z"/></svg>
<div class="w" style="left:41px;top:687px;width:122px">4011-00</div>
<div class="g" style="left:162px;top:687px;width:302px">Sales Services</div>
<div class="w r" style="left:463px;top:687px;width:120px">$4,150.00</div>
<div style="left:589px;top:689px;width:14px;height:14px;background:#fff;border:1px solid #000"></div>
<div class="w" style="left:31px;top:704px;width:578px">Network installation services</div>

<!-- mdi scrollbars -->
<div style="left:0;top:729px;width:1018px;height:17px;background:#c0c0c0;border-top:1px solid #fff;border-bottom:2px solid #303030"></div>
<div class="t" style="left:2px;top:730px;width:16px;height:15px"><svg style="left:3px;top:2px;width:11px;height:11px"><use href="#al"/></svg></div>
<div class="t" style="left:18px;top:730px;width:965px;height:15px"></div>
<div class="dz" style="left:983px;top:730px;width:8px;height:14px"></div>
<div class="t" style="left:991px;top:730px;width:15px;height:15px"><svg style="left:2px;top:2px;width:11px;height:11px"><use href="#ar"/></svg></div>
<div style="left:1006px;top:37px;width:12px;height:692px;background:#c0c0c0;border-left:1px solid #fff"></div>
<div class="t" style="left:1006px;top:37px;width:12px;height:16px"><svg style="left:1px;top:2px;width:11px;height:11px"><use href="#au"/></svg></div>
<div class="dz" style="left:1006px;top:556px;width:12px;height:159px"></div>
<div class="t" style="left:1006px;top:715px;width:12px;height:14px"><svg style="left:1px;top:2px;width:11px;height:11px"><use href="#ad"/></svg></div>
<div style="left:0;top:36px;width:2px;height:710px;background:#303030"></div>

<!-- status bar -->
<div style="left:0;top:746px;width:1018px;height:15px;background:#c0c0c0;border-top:1px solid #fff"></div>
<div style="left:3px;top:750px;font-size:10.800px">Ready.&nbsp; [Company: Computers, Inc. User: ADMIN Date: 10/29/2002]</div>

<!-- cursor -->
<svg style="left:274px;top:374px;width:15px;height:23px"><path d="M1.500 1v17l4-4 3 7 3-1-3-7h5z" fill="#fff" stroke="#000"/></svg>
</div>
</body></html>
